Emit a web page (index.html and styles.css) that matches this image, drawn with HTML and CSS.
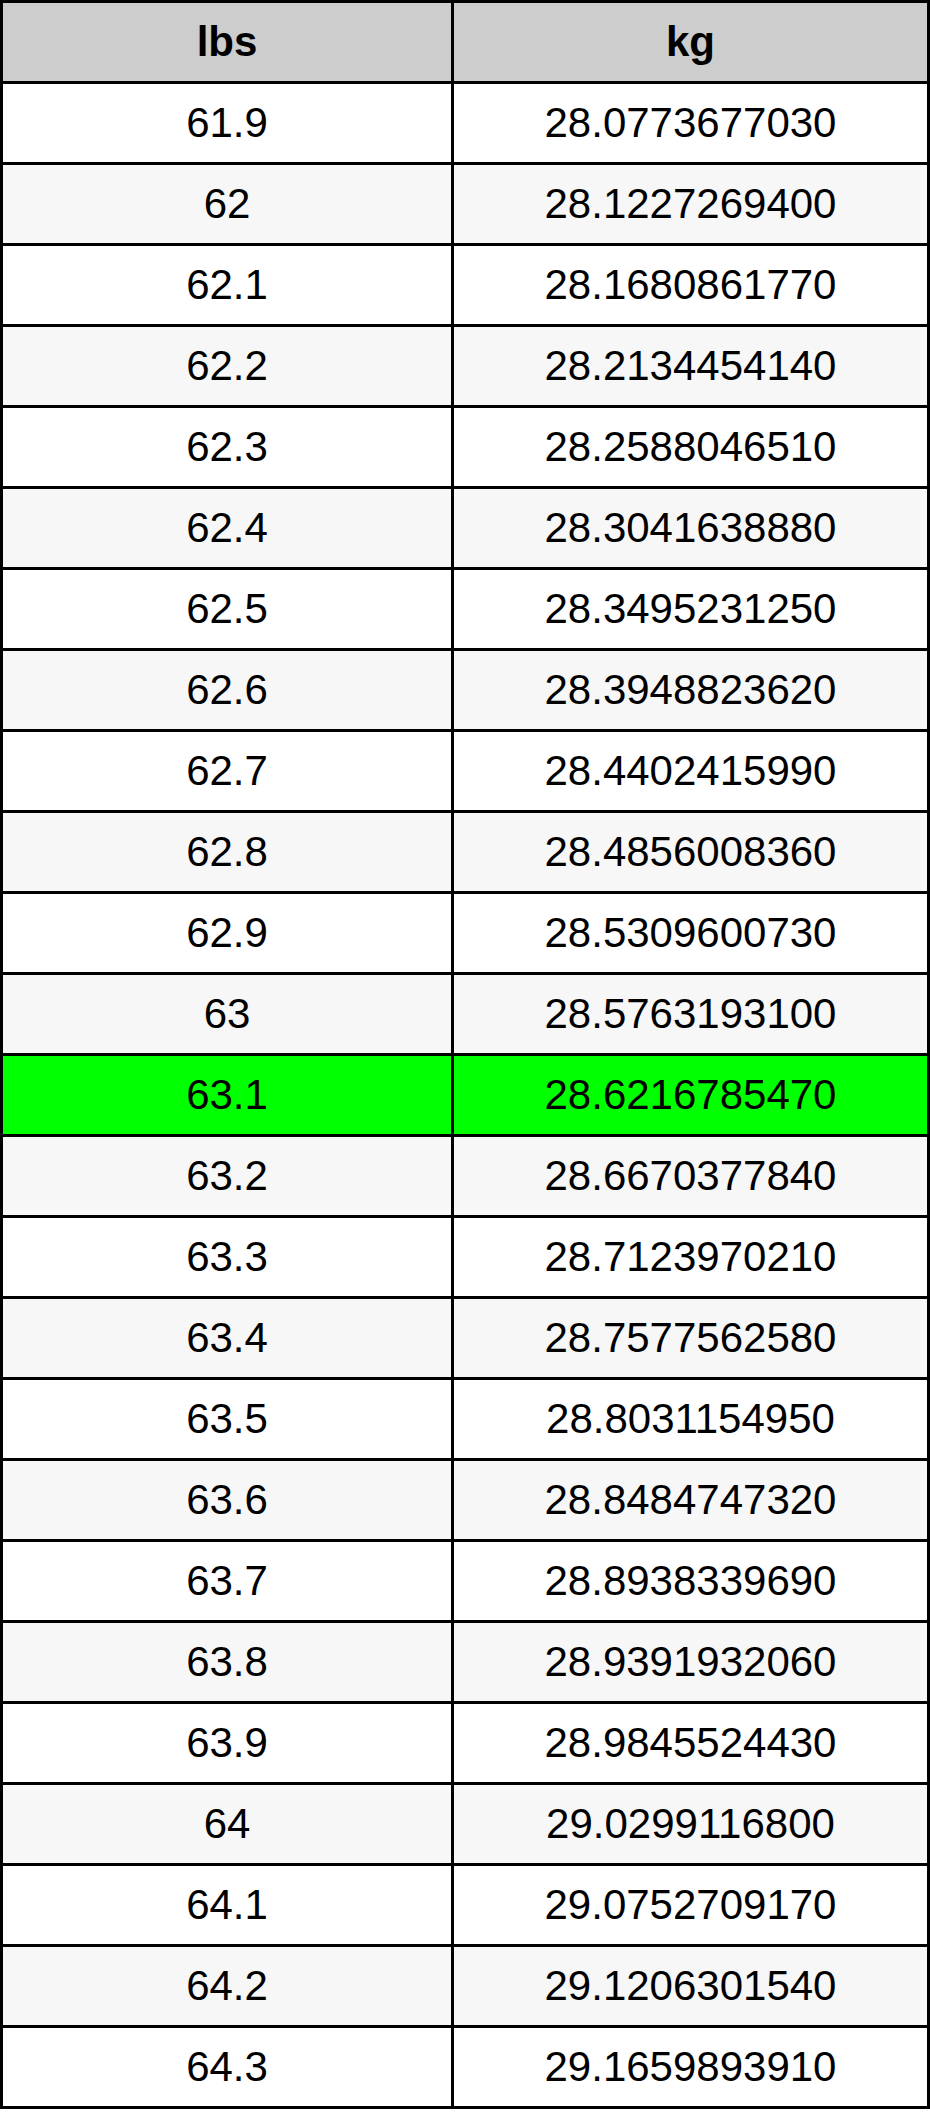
FILE: index.html
```html
<!DOCTYPE html>
<html lang="en">
<head>
<meta charset="utf-8">
<title>lbs to kg</title>
<link rel="stylesheet" href="styles.css">
</head>
<body>
<table class="conv">
  <thead>
    <tr><th class="c-lbs">lbs</th><th class="c-kg">kg</th></tr>
  </thead>
  <tbody>
    <tr><td>61.9</td><td>28.0773677030</td></tr>
    <tr><td>62</td><td>28.1227269400</td></tr>
    <tr><td>62.1</td><td>28.1680861770</td></tr>
    <tr><td>62.2</td><td>28.2134454140</td></tr>
    <tr><td>62.3</td><td>28.2588046510</td></tr>
    <tr><td>62.4</td><td>28.3041638880</td></tr>
    <tr><td>62.5</td><td>28.3495231250</td></tr>
    <tr><td>62.6</td><td>28.3948823620</td></tr>
    <tr><td>62.7</td><td>28.4402415990</td></tr>
    <tr><td>62.8</td><td>28.4856008360</td></tr>
    <tr><td>62.9</td><td>28.5309600730</td></tr>
    <tr><td>63</td><td>28.5763193100</td></tr>
    <tr class="hl"><td>63.1</td><td>28.6216785470</td></tr>
    <tr><td>63.2</td><td>28.6670377840</td></tr>
    <tr><td>63.3</td><td>28.7123970210</td></tr>
    <tr><td>63.4</td><td>28.7577562580</td></tr>
    <tr><td>63.5</td><td>28.8031154950</td></tr>
    <tr><td>63.6</td><td>28.8484747320</td></tr>
    <tr><td>63.7</td><td>28.8938339690</td></tr>
    <tr><td>63.8</td><td>28.9391932060</td></tr>
    <tr><td>63.9</td><td>28.9845524430</td></tr>
    <tr><td>64</td><td>29.0299116800</td></tr>
    <tr><td>64.1</td><td>29.0752709170</td></tr>
    <tr><td>64.2</td><td>29.1206301540</td></tr>
    <tr><td>64.3</td><td>29.1659893910</td></tr>
  </tbody>
</table>
</body>
</html>
```
FILE: styles.css
```css
html, body {
  margin: 0;
  padding: 0;
  background: #ffffff;
}

.conv {
  width: 930px;
  border-collapse: separate;
  border-spacing: 3px;
  background: #000000;
  table-layout: fixed;
  font-family: "Liberation Sans", Arial, sans-serif;
  font-size: 42px;
  color: #000000;
}

.conv th,
.conv td {
  height: 78px;
  padding: 0 0 1px 0;
  box-sizing: border-box;
  text-align: center;
  vertical-align: middle;
  line-height: 1;
  background: #ffffff;
}

.conv th {
  background: #cdcdcd;
  font-weight: bold;
}

.c-lbs {
  width: 448px;
}

.c-kg {
  width: 473px;
}

.conv tbody tr:nth-child(even) td {
  background: #f7f7f7;
}

.conv tbody tr.hl td {
  background: #00ff00;
}
```
